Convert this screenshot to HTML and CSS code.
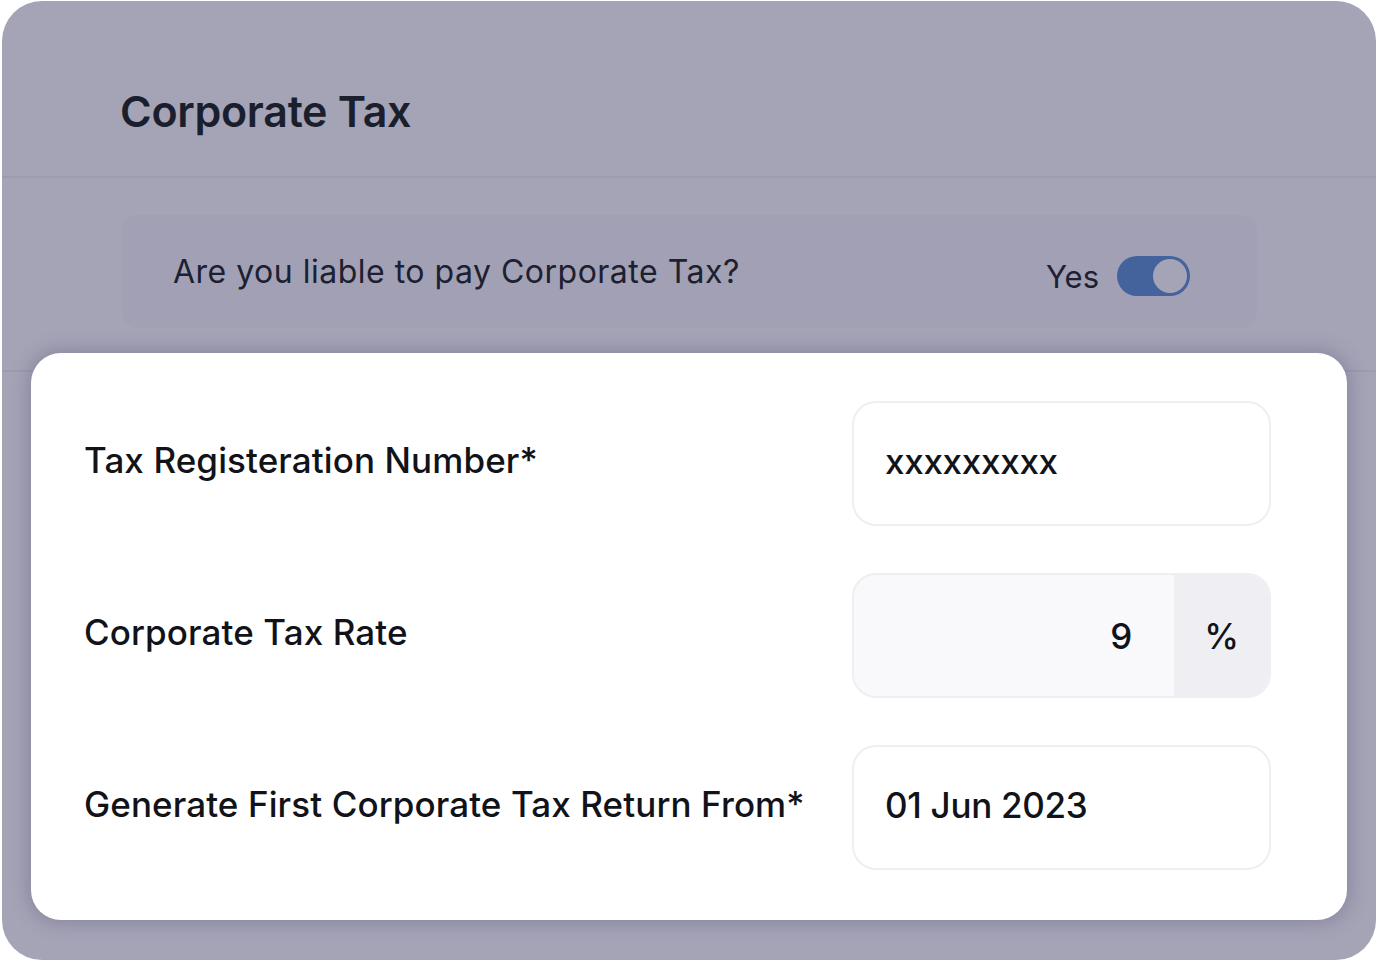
FILE: index.html
```html
<!DOCTYPE html>
<html lang="en">
<head>
<meta charset="utf-8">
<title>Corporate Tax</title>
<link rel="stylesheet" href="styles.css">
</head>
<body>
<div class="panel">
  <div class="panel-header">
    <h1 class="title">Corporate Tax</h1>
  </div>
  <div class="question-section">
    <div class="question-box">
      <span class="question">Are you liable to pay Corporate Tax?</span>
      <div class="toggle-wrap">
        <span class="toggle-label">Yes</span>
        <span class="toggle"><span class="knob"></span></span>
      </div>
    </div>
  </div>
  <div class="form-card">
    <div class="form-row">
      <label class="field-label">Tax Registeration Number*</label>
      <div class="field">xxxxxxxxx</div>
    </div>
    <div class="form-row">
      <label class="field-label">Corporate Tax Rate</label>
      <div class="field field-rate">
        <span class="rate-value">9</span>
        <span class="rate-suffix">%</span>
      </div>
    </div>
    <div class="form-row">
      <label class="field-label">Generate First Corporate Tax Return From*</label>
      <div class="field">01 Jun 2023</div>
    </div>
  </div>
</div>
</body>
</html>
```

FILE: styles.css
```css
* { box-sizing: border-box; }
html, body { margin: 0; padding: 0; background: #ffffff; }
body {
  font-family: Inter, "Noto Sans", sans-serif;
  width: 1378px;
  height: 961px;
  overflow: hidden;
}
.panel {
  margin: 1px 2px 0 2px;
  width: 1374px;
  height: 959px;
  background: #a5a4b7;
  border-radius: 40px;
  overflow: hidden;
  display: flex;
  flex-direction: column;
}
.panel-header {
  height: 177px;
  border-bottom: 2px solid #9c9bb0;
  display: flex;
  align-items: center;
  padding-left: 118px;
  padding-top: 44px;
}
.title {
  margin: 0;
  font-size: 43px;
  font-weight: 600;
  color: #1b1f2d;
  letter-spacing: -0.3px;
}
.question-section {
  padding: 37px 119px 42px 120px;
  border-bottom: 2px solid #9c9bb0;
}
.question-box {
  height: 113px;
  background: #a2a0b5;
  border-radius: 16px;
  display: flex;
  align-items: center;
  justify-content: space-between;
  padding: 0 67px 0 51px;
}
.question {
  font-size: 32px;
  color: #1c2030;
  letter-spacing: 0.5px;
}
.toggle-wrap {
  display: flex;
  align-items: center;
  gap: 18px;
  padding-top: 9px;
}
.toggle-label {
  font-size: 31px;
  color: #1c2030;
}
.toggle {
  width: 73px;
  height: 40px;
  border-radius: 20px;
  background: #44629b;
  display: flex;
  align-items: center;
  justify-content: flex-end;
  padding: 3px;
}
.knob {
  width: 34px;
  height: 34px;
  border-radius: 50%;
  background: #a5a4b7;
}
.form-card {
  margin: -19px 29px 0 29px;
  background: #ffffff;
  border-radius: 30px;
  padding: 48px 76px 50px 53px;
  display: flex;
  flex-direction: column;
  gap: 47px;
  box-shadow: 0 0 18px 4px rgba(70, 66, 100, 0.28);
  position: relative;
}
.form-row {
  display: flex;
  align-items: center;
  justify-content: space-between;
}
.field-label {
  font-size: 35px;
  font-weight: 500;
  color: #111318;
  letter-spacing: 0.1px;
  padding-bottom: 8px;
}
.field {
  width: 419px;
  height: 125px;
  border: 2px solid #eeeef3;
  border-radius: 24px;
  display: flex;
  align-items: center;
  padding-left: 31px;
  padding-bottom: 6px;
  font-size: 35px;
  font-weight: 500;
  color: #111318;
  letter-spacing: -0.3px;
}
.field-rate {
  padding-left: 0;
  padding-bottom: 0;
  background: #f9f8fb;
  overflow: hidden;
}
.rate-value {
  flex: 1;
  text-align: right;
  padding-right: 42px;
}
.rate-suffix {
  width: 95px;
  height: 100%;
  background: #efeff3;
  display: flex;
  align-items: center;
  justify-content: center;
}
```
